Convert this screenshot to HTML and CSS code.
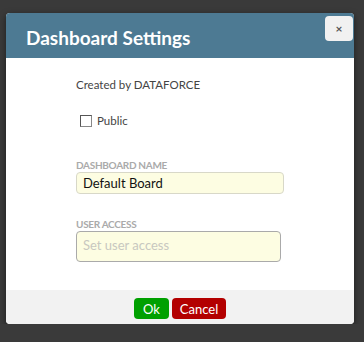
FILE: index.html
```html
<!DOCTYPE html>
<html lang="en">
  <head>
    <meta charset="UTF-8" />
    <title>Dashboard Settings</title>
    <link rel="stylesheet" href="styles.css">
  </head>
  <body>
    <div class="modal">
      <div class="modal-header">
        <h1>Dashboard Settings</h1>
        <button class="close">&times;</button>
      </div>

      <div class="modal-body">
        <p class="created">Created by DATAFORCE</p>

        <label class="public">
          <span class="check"></span>
          <span>Public</span>
        </label>

        <div class="field">
          <p class="field-label">DASHBOARD NAME</p>
          <input type="text" class="name-input" value="Default Board" />
        </div>

        <div class="field">
          <p class="field-label">USER ACCESS</p>
          <textarea class="access-input" placeholder="Set user access"></textarea>
        </div>
      </div>

      <div class="modal-footer">
        <button class="btn btn-ok">Ok</button>
        <button class="btn btn-cancel">Cancel</button>
      </div>
    </div>
  </body>
</html>
```

FILE: styles.css
```css
body {
  margin: 0;
  padding: 13px 0 0 6px;
  background-color: #3a3a3a;
  font-family: Lato, 'Open Sans', sans-serif;
}

.modal {
  position: relative;
  width: 348px;
  height: 311px;
  background-color: #fff;
  border-radius: 4px;
  overflow: hidden;
  display: flex;
  flex-direction: column;
  box-shadow: 0 2px 6px rgba(0, 0, 0, 0.5);
}

.modal-header {
  height: 45px;
  box-sizing: border-box;
  background-color: #4d7a93;
  display: flex;
  align-items: center;
  padding: 3px 0 0 20px;
}

.modal-header h1 {
  margin: 0;
  color: #fff;
  font-size: 19px;
  font-weight: 700;
}

.close {
  position: absolute;
  top: 3px;
  right: 1px;
  width: 28px;
  height: 25px;
  border: none;
  border-radius: 4px;
  background-color: #f1f1f1;
  color: #555;
  font-family: inherit;
  font-size: 12px;
  font-weight: 700;
  padding: 0;
}

.modal-body {
  flex: 1;
  padding: 20px 0 0 70px;
}

.created {
  margin: 0;
  font-size: 11.5px;
  color: #444;
  height: 16px;
}

.public {
  display: flex;
  align-items: center;
  gap: 5px;
  margin: 20px 0 0 4px;
  font-size: 11.5px;
  color: #444;
}

.check {
  width: 10px;
  height: 10px;
  border: 1px solid #555;
  border-right-color: #888;
  border-bottom-color: #888;
  background-color: #fff;
}

.field {
  margin-top: 32px;
}

.field + .field {
  margin-top: 24px;
}

.field-label {
  margin: 0 0 1px;
  font-size: 10px;
  font-weight: 700;
  color: #aaa;
  letter-spacing: -0.3px;
}

.name-input,
.access-input {
  display: block;
  box-sizing: border-box;
  background-color: #fdfde2;
  border-radius: 4px;
  font-family: inherit;
  font-size: 13px;
  color: #111;
  padding: 0 6px;
  margin: 0;
  outline: none;
}

.name-input {
  width: 208px;
  height: 22px;
  border: 1px solid #d8d8c8;
}

.access-input {
  width: 205px;
  height: 31px;
  border: 1px solid #aaa;
  resize: none;
  padding-top: 5px;
}

.access-input::placeholder {
  color: #c8c8c0;
}

.modal-footer {
  height: 34px;
  background-color: #f2f2f2;
  display: flex;
  justify-content: center;
  align-items: flex-start;
  gap: 3px;
  padding-top: 8px;
  box-sizing: border-box;
}

.btn {
  height: 21px;
  border: none;
  border-radius: 4px;
  color: #fff;
  font-family: inherit;
  font-size: 13px;
  padding: 0;
}

.btn-ok {
  width: 35px;
  background-color: #00a000;
}

.btn-cancel {
  width: 54px;
  background-color: #b30000;
}
```
